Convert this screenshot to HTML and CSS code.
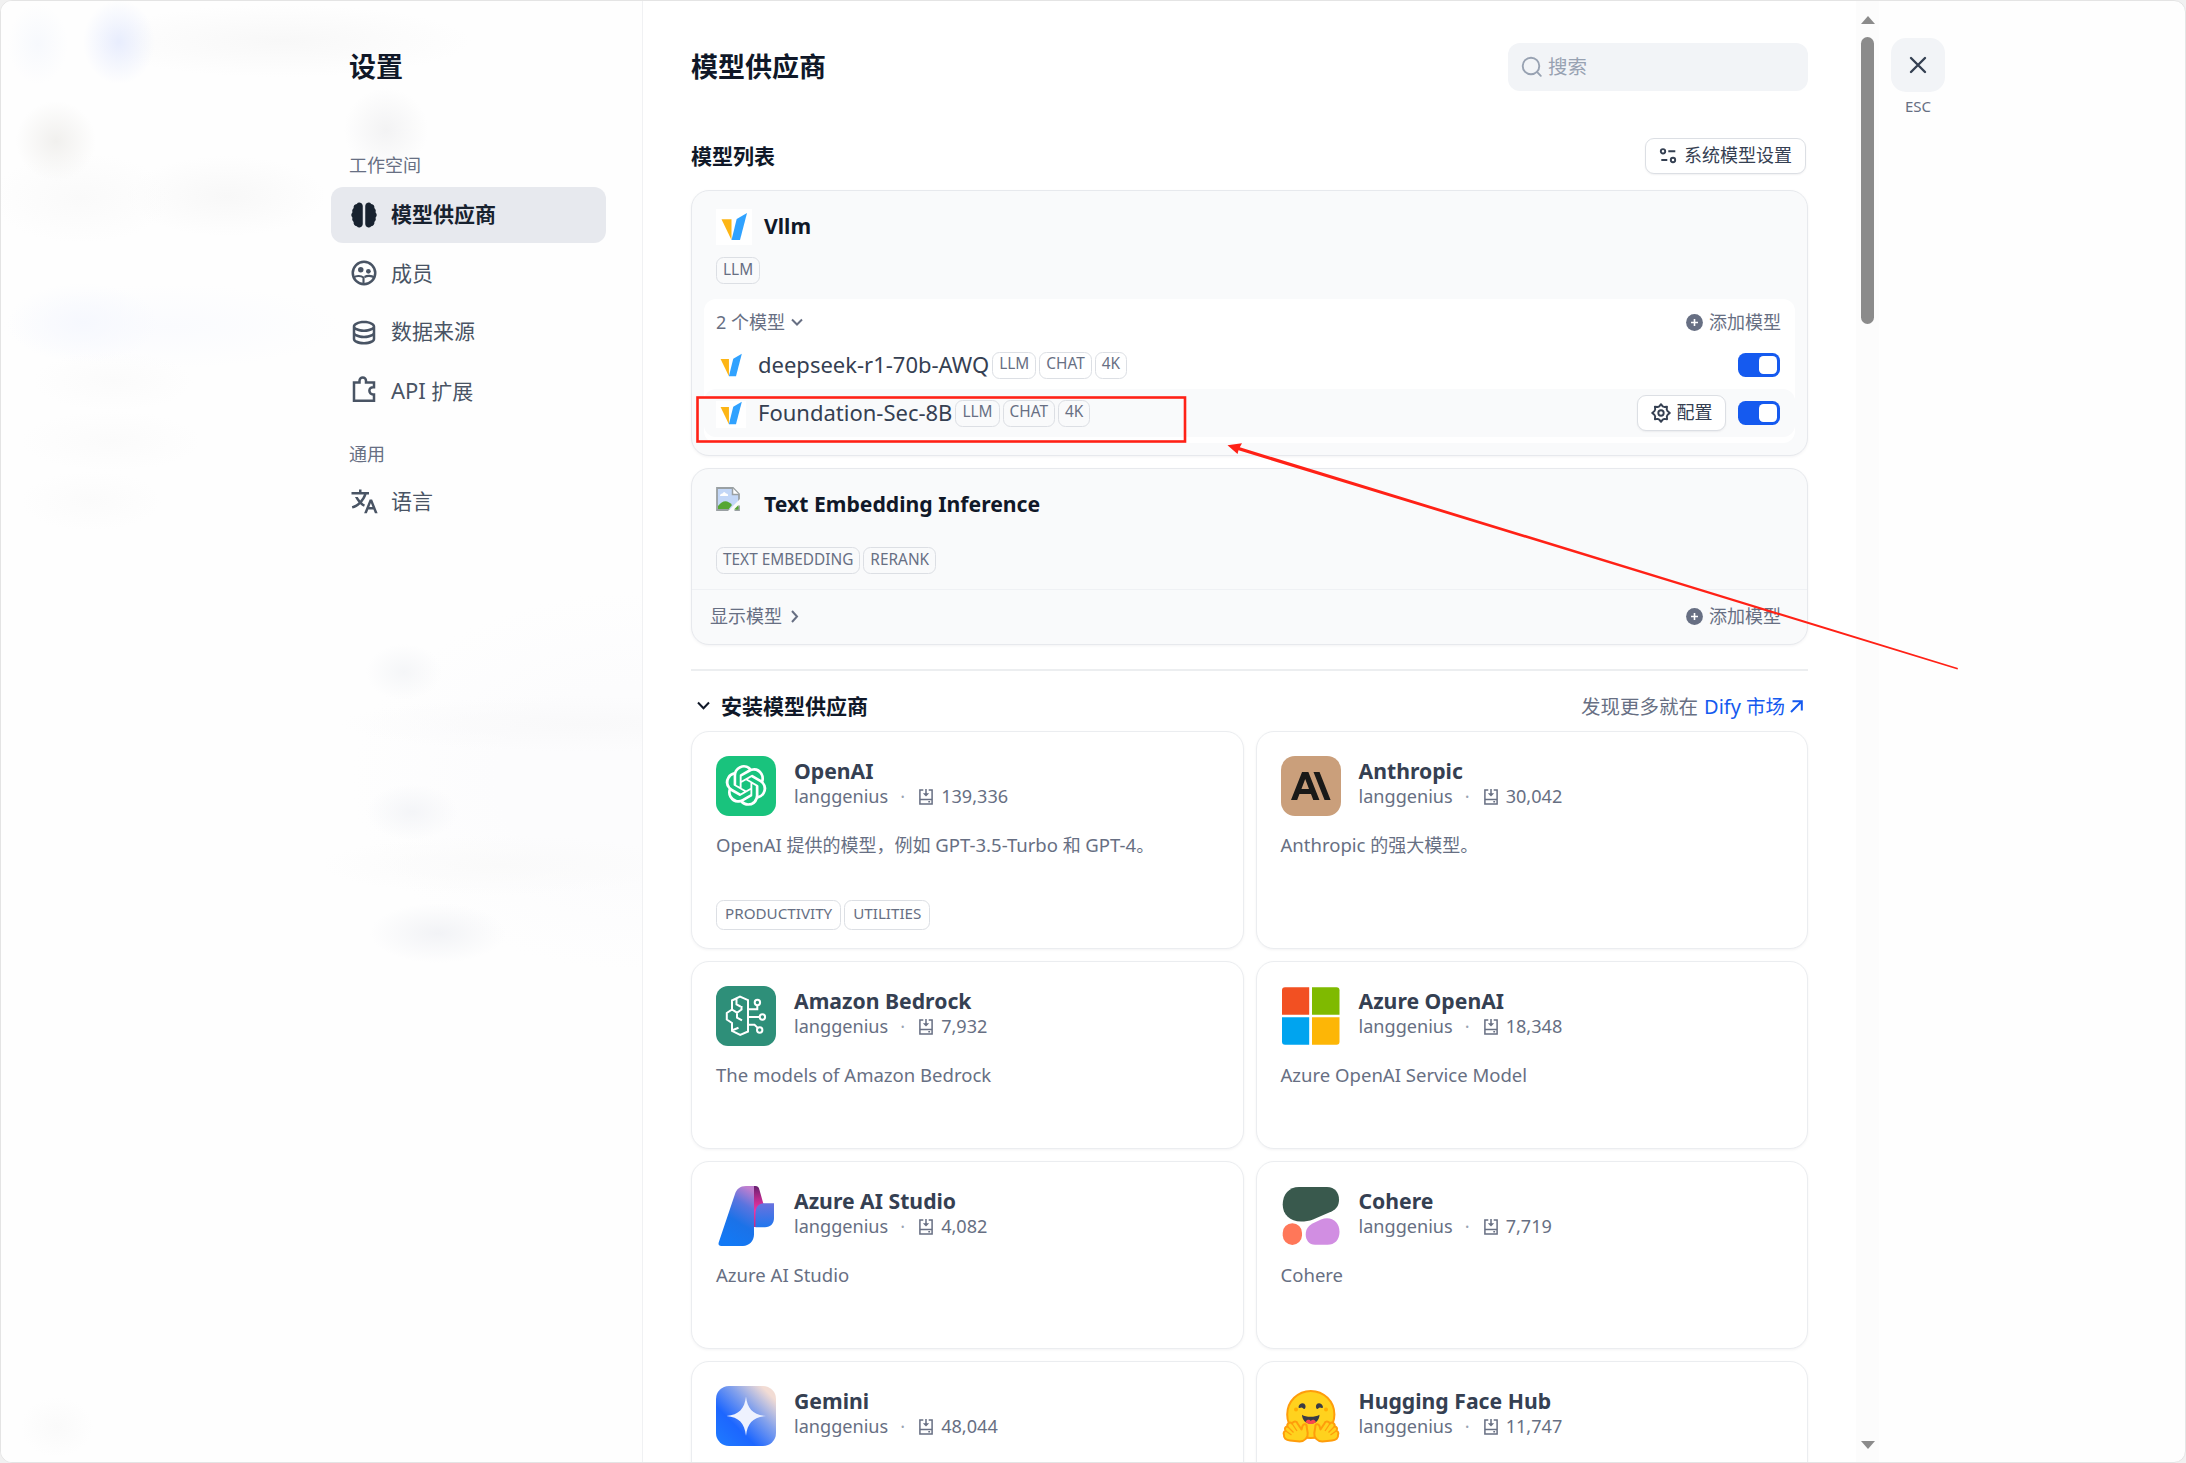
FILE: index.html
```html
<!DOCTYPE html>
<html lang="zh-CN">
<head>
<meta charset="utf-8">
<title>设置</title>
<link rel="stylesheet" href="styles.css">
</head>
<body>
<svg class="defs" width="0" height="0">
  <symbol id="vllm" viewBox="0 0 36 36"><path fill="#fdb515" d="M5.5 10.3h10V31z"/><path fill="#30a2ff" d="M31 4L20.7 10 15.5 31H24z"/></symbol>
  <symbol id="vllm-row" viewBox="0 3 36 32.4"><path fill="#fdb515" d="M5.5 10.3h10V31z"/><path fill="#30a2ff" d="M31 4L20.7 10 15.5 31H24z"/></symbol>
  <symbol id="plus" viewBox="0 0 17 17"><circle cx="8.5" cy="8.5" r="8.4" fill="#676f83"/><path d="M8.5 5v7M5 8.5h7" stroke="#fff" stroke-width="1.6"/></symbol>
  <symbol id="install" viewBox="0 0 14 16"><path fill="none" stroke="#676f83" stroke-width="1.5" d="M4.3 1H.9v14h12.2V1H9.7M.9 10.4h12.2M7 0v6M9.3 12.7h1.8"/><path fill="#676f83" d="M3.8 4.2h6.4L7 7.6z"/></symbol>
</svg>
<div class="window">
  <aside class="sidebar">
    <h1 class="sidebar-title">设置</h1>
    <div class="group-label">工作空间</div>
    <nav class="menu">
      <a class="menu-item active"><svg class="menu-icon" viewBox="0 0 24 24"><path d="M11 4.6v14.8A2.7 2.7 0 0 1 6.2 20.900A3 3 0 0 1 3.700 17.600A3.300 3.300 0 0 1 2.700 14A3 3 0 0 1 2.700 10A3.300 3.300 0 0 1 3.700 6.400A3 3 0 0 1 6.200 3.100A2.700 2.700 0 0 1 11 4.600ZM13 4.600v14.800A2.700 2.700 0 0 0 17.800 20.900A3 3 0 0 0 20.300 17.600A3.300 3.300 0 0 0 21.300 14A3 3 0 0 0 21.300 10A3.300 3.300 0 0 0 20.300 6.400A3 3 0 0 0 17.800 3.100A2.700 2.700 0 0 0 13 4.600Z"/></svg>模型供应商</a>
      <a class="menu-item"><svg class="menu-icon" viewBox="0 0 24 24"><g fill="none" stroke="currentColor" stroke-width="2"><circle cx="12" cy="12" r="9"/><path d="M3.800 15.600c1.700-1.500 5.600-1.800 7.800 0V21M12.500 15.200c2-1.300 5.600-1.100 7.700.3" stroke-width="1.700"/></g><circle cx="9.400" cy="9.300" r="2.200"/><circle cx="15.500" cy="10.600" r="1.900"/></svg>成员</a>
      <a class="menu-item"><svg class="menu-icon" viewBox="0 0 24 24"><path d="M5 12.500C5 12.813 5.461 13.358 6.530 13.893C7.914 14.585 9.877 15 12 15C14.123 15 16.086 14.585 17.470 13.893C18.539 13.358 19 12.813 19 12.500V10.329C17.350 11.348 14.827 12 12 12C9.173 12 6.650 11.348 5 10.329V12.500ZM19 15.329C17.350 16.348 14.827 17 12 17C9.173 17 6.650 16.348 5 15.329V17.500C5 17.813 5.461 18.358 6.530 18.893C7.914 19.585 9.877 20 12 20C14.123 20 16.086 19.585 17.470 18.893C18.539 18.358 19 17.813 19 17.500V15.329ZM3 17.500V7.500C3 5.015 7.029 3 12 3C16.971 3 21 5.015 21 7.500V17.500C21 19.985 16.971 22 12 22C7.029 22 3 19.985 3 17.500ZM12 10C14.123 10 16.086 9.585 17.470 8.893C18.539 8.358 19 7.813 19 7.500C19 7.187 18.539 6.642 17.470 6.107C16.086 5.415 14.123 5 12 5C9.877 5 7.914 5.415 6.530 6.107C5.461 6.642 5 7.187 5 7.500C5 7.813 5.461 8.358 6.530 8.893C7.914 9.585 9.877 10 12 10Z"/></svg>数据来源</a>
      <a class="menu-item"><svg class="menu-icon" viewBox="0 0 24 24"><path fill="none" stroke="currentColor" stroke-width="2" d="M4 6h4.400V4.500a2.600 2.600 0 0 1 5.200 0V6H20v3.700h-.8a2.900 2.900 0 0 0 0 5.800h.8V20.500H4z"/></svg><span><span class="latin-21">API</span> 扩展</span></a>
    </nav>
    <div class="group-label second">通用</div>
    <nav class="menu">
      <a class="menu-item"><svg class="menu-icon" viewBox="0 0 24 24"><path d="M18.500 10L22.900 21H20.745L19.544 18H15.454L14.255 21H12.101L16.500 10H18.500ZM10 2V4H16V6L14.032 6.001C13.243 8.366 11.999 10.506 10.412 12.301C11.134 12.946 11.917 13.518 12.748 14.008L11.997 15.886C10.924 15.278 9.919 14.552 9 13.725C7.214 15.332 5.109 16.555 2.799 17.273L2.263 15.344C4.239 14.720 6.045 13.674 7.590 12.302C6.463 11.028 5.509 9.580 4.767 8L7.007 8C7.570 9.039 8.240 10.003 9 10.877C10.228 9.465 11.221 7.816 11.910 6.001L2 6V4H8V2H10ZM17.500 12.885L16.253 16H18.745L17.500 12.885Z"/></svg>语言</a>
    </nav>
  </aside>

  <main class="content">
    <header class="page-head">
      <h1 class="page-title">模型供应商</h1>
      <div class="search"><svg width="22" height="22" viewBox="0 0 22 22"><g fill="none" stroke="#98a2b2" stroke-width="1.900" stroke-linecap="round"><circle cx="10" cy="10" r="8.300"/><path d="M16.200 16.200l3.600 3.600"/></g></svg>搜索</div>
    </header>
    <div class="list-head">
      <h2 class="section-title">模型列表</h2>
      <button class="btn system"><svg width="18" height="17" viewBox="0 0 18 17"><g fill="none" stroke="#354052" stroke-width="1.900"><circle cx="4" cy="4.300" r="2.200"/><path d="M9.300 4.300h7M2.300 13h6"/><circle cx="14" cy="13" r="2.200"/></g></svg>系统模型设置</button>
    </div>

    <section class="provider vllm">
      <div class="provider-name"><svg class="logo36"><use href="#vllm"/></svg><span>Vllm</span></div>
      <div class="badges"><span class="badge">LLM</span></div>
      <div class="models">
        <div class="models-head">
          <span class="count">2 个模型<svg width="12" height="9" viewBox="0 0 12 9"><path d="M1 1.500l5 5 5-5" fill="none" stroke="#676f83" stroke-width="2"/></svg></span>
          <span class="add"><svg width="17" height="17"><use href="#plus"/></svg>添加模型</span>
        </div>
        <div class="model-row">
          <svg class="row-logo"><use href="#vllm-row"/></svg><span class="model-name">deepseek-r1-70b-AWQ</span>
          <span class="badge">LLM</span><span class="badge">CHAT</span><span class="badge">4K</span>
          <span class="toggle"><i></i></span>
        </div>
        <div class="model-row hover">
          <svg class="row-logo"><use href="#vllm-row"/></svg><span class="model-name">Foundation-Sec-8B</span>
          <span class="badge">LLM</span><span class="badge">CHAT</span><span class="badge">4K</span>
          <button class="btn config"><svg width="20" height="20" viewBox="0 0 20 20"><g fill="none" stroke="#354052" stroke-width="1.900" stroke-linejoin="round"><circle cx="10" cy="10" r="2.700"/><path d="M8.300 3.300L10 1.200l1.700 2.100 1.600.7 2.700-.3-.3 2.700.8 1.700L18.800 10l-2.200 1.800-.8 1.700.3 2.700-2.700-.3-1.700.7L10 18.800l-1.700-2.200-1.700-.7-2.700.3.300-2.700-.8-1.700L1.200 10l2.200-1.900.8-1.700-.3-2.700 2.700.3z"/></g></svg>配置</button>
          <span class="toggle"><i></i></span>
        </div>
      </div>
    </section>

    <section class="provider tei">
      <div class="provider-name">
        <svg class="broken" width="24" height="24" viewBox="0 0 24 24"><path d="M1 1h16l6 6v16H1z" fill="#c3d7f7"/><path d="M2 22v-3q7-9 14-1l-4 5z" fill="#55a633"/><path d="M4 9q0-2.500 2.500-2.500Q8 3.500 10 6.500 12.500 6.500 12 9z" fill="#fff"/><path d="M1 23V1h16l6 6v16z" fill="none" stroke="#9aa0a3" stroke-width="1.800"/><path d="M16.500 1v6.500H23" fill="#fff" stroke="#9aa0a3" stroke-width="1.500"/><path d="M24 12L12 24h6l6-6z" fill="#f9fafb"/><path d="M18 22.500l4.500-4.500v4.500z" fill="#55a633"/></svg><span>Text Embedding Inference</span></div>
      <div class="badges"><span class="badge">TEXT EMBEDDING</span><span class="badge">RERANK</span></div>
      <div class="provider-foot">
        <span class="show">显示模型<svg width="8" height="13" viewBox="0 0 8 13"><path d="M1 1l5 5.500L1 12" fill="none" stroke="#676f83" stroke-width="2"/></svg></span>
        <span class="add"><svg width="17" height="17"><use href="#plus"/></svg>添加模型</span>
      </div>
    </section>

    <hr class="rule">
    <div class="install-head">
      <h2 class="section-title install-title"><svg width="13" height="10" viewBox="0 0 13 10"><path d="M1 1.500l5.500 5.700L12 1.500" fill="none" stroke="#101828" stroke-width="2"/></svg>安装模型供应商</h2>
      <p class="discover">发现更多就在 <a><span><span class="latin-195">Dify</span> 市场</span><svg width="13" height="13" viewBox="0 0 13 13"><path d="M2.500 1.200h9.300v9.300M11.500 1.500L1 12" fill="none" stroke="#155aef" stroke-width="2"/></svg></a></p>
    </div>

    <div class="grid">
      <article class="card tall">
        <div class="card-head">
          <svg class="logo" viewBox="0 0 60 60"><rect width="60" height="60" rx="13" fill="#19c37d"/><path transform="translate(9.600 9) scale(1.700)" fill="#fff" d="M22.2819 9.8211a5.9847 5.9847 0 0 0-.5157-4.9108 6.0462 6.0462 0 0 0-6.5098-2.9A6.0651 6.0651 0 0 0 4.9807 4.1818a5.9847 5.9847 0 0 0-3.9977 2.9 6.0462 6.0462 0 0 0 .7427 7.0966 5.98 5.98 0 0 0 .511 4.9107 6.051 6.051 0 0 0 6.5146 2.9001A5.9847 5.9847 0 0 0 13.2599 24a6.0557 6.0557 0 0 0 5.7718-4.2058 5.9894 5.9894 0 0 0 3.9977-2.9001 6.0557 6.0557 0 0 0-.7475-7.0729zm-9.022 12.6081a4.4755 4.4755 0 0 1-2.8764-1.0408l.1419-.0804 4.7783-2.7582a.7948.7948 0 0 0 .3927-.6813v-6.7369l2.02 1.1686a.071.071 0 0 1 .038.052v5.5826a4.504 4.504 0 0 1-4.4945 4.4944zm-9.6607-4.1254a4.4708 4.4708 0 0 1-.5346-3.0137l.142.0852 4.783 2.7582a.7712.7712 0 0 0 .7806 0l5.8428-3.3685v2.3324a.0804.0804 0 0 1-.0332.0615L9.74 19.9502a4.4992 4.4992 0 0 1-6.1408-1.6464zM2.3408 7.8956a4.485 4.485 0 0 1 2.3655-1.9728V11.6a.7664.7664 0 0 0 .3879.6765l5.8144 3.3543-2.0201 1.1685a.0757.0757 0 0 1-.071 0l-4.8303-2.7865A4.504 4.504 0 0 1 2.3408 7.872zm16.5963 3.8558L13.1038 8.364 15.1192 7.2a.0757.0757 0 0 1 .071 0l4.8303 2.7913a4.4944 4.4944 0 0 1-.6765 8.1042v-5.6772a.79.79 0 0 0-.407-.667zm2.0107-3.0231l-.142-.0852-4.7735-2.7818a.7759.7759 0 0 0-.7854 0L9.409 9.2297V6.8974a.0662.0662 0 0 1 .0284-.0615l4.8303-2.7866a4.4992 4.4992 0 0 1 6.6802 4.66zM8.3065 12.863l-2.02-1.1638a.0804.0804 0 0 1-.038-.0567V6.0742a4.4992 4.4992 0 0 1 7.3757-3.4537l-.142.0805L8.704 5.459a.7948.7948 0 0 0-.3927.6813zm1.0976-2.3654l2.602-1.4998 2.6069 1.4998v2.9994l-2.5974 1.4997-2.6067-1.4997Z"/></svg>
          <div class="meta"><h3>OpenAI</h3><p>langgenius<b>·</b><svg width="14" height="16"><use href="#install"/></svg>139,336</p></div>
        </div>
        <p class="desc"><span class="latin-18">OpenAI</span> 提供的模型，例如 <span class="latin-18">GPT-3.5-Turbo</span> 和 <span class="latin-18">GPT-4</span>。</p>
        <div class="tags"><span class="tag">PRODUCTIVITY</span><span class="tag">UTILITIES</span></div>
      </article>
      <article class="card tall">
        <div class="card-head">
          <svg class="logo" viewBox="0 0 60 60"><rect width="60" height="60" rx="14" fill="#ca9f7b"/><path transform="translate(10 10.200) scale(1.650)" fill="#191918" d="M17.3041 3.541h-3.6718l6.696 16.918H24Zm-10.6082 0L0 20.459h3.7442l1.3693-3.5527h7.0052l1.3693 3.5528h3.7442L10.5363 3.5409Zm-.3712 10.2232 2.2914-5.9456 2.2914 5.9456Z"/></svg>
          <div class="meta"><h3>Anthropic</h3><p>langgenius<b>·</b><svg width="14" height="16"><use href="#install"/></svg>30,042</p></div>
        </div>
        <p class="desc"><span class="latin-18">Anthropic</span> 的强大模型。</p>
      </article>
      <article class="card">
        <div class="card-head">
          <svg class="logo" viewBox="0 0 60 60"><rect width="60" height="60" rx="12" fill="#2e8f79"/><g fill="none" stroke="#fff" stroke-width="2"><path d="M32 14.200L24 10.700 16 14.500V23.500L10.800 27V33.500L16 37V45L24.200 49 32 45.500ZM16 23.500l5 3.200 4.500-3.200V20M21 26.700v5l5 2.700M20.500 13v5.500l4 2M17 44l5.500-2.200M32 23.300h9.300V19M32 31h11.700M32 38.700h6.500l3.500 3.400"/><circle cx="41.400" cy="16.500" r="2.700"/><circle cx="46.400" cy="31" r="2.700"/><circle cx="43.700" cy="44" r="2.700"/></g></svg>
          <div class="meta"><h3>Amazon Bedrock</h3><p>langgenius<b>·</b><svg width="14" height="16"><use href="#install"/></svg>7,932</p></div>
        </div>
        <p class="desc"><span class="latin-18">The models of Amazon Bedrock</span></p>
      </article>
      <article class="card">
        <div class="card-head">
          <svg class="logo" viewBox="0 0 60 60"><path fill="#f25022" d="M4 1.300h24.200v27.400H1V4.300a3 3 0 0 1 3-3z"/><path fill="#7fba00" d="M31 1.300h24.500a3 3 0 0 1 3 3v24.400H31z"/><path fill="#00a4ef" d="M1 31.300h27.200v27.400H4a3 3 0 0 1-3-3z"/><path fill="#fdb606" d="M31 31.300h27.500v24.400a3 3 0 0 1-3 3H31z"/></svg>
          <div class="meta"><h3>Azure OpenAI</h3><p>langgenius<b>·</b><svg width="14" height="16"><use href="#install"/></svg>18,348</p></div>
        </div>
        <p class="desc"><span class="latin-18">Azure OpenAI Service Model</span></p>
      </article>
      <article class="card">
        <div class="card-head">
          <svg class="logo" viewBox="0 0 60 60"><defs><linearGradient id="az1" x1=".75" y1="0" x2=".4" y2="1"><stop offset="0" stop-color="#c07fcf"/><stop offset=".28" stop-color="#5a74df"/><stop offset=".6" stop-color="#1b72e8"/><stop offset="1" stop-color="#1279f5"/></linearGradient><linearGradient id="az2" x1="0" y1="0" x2="0" y2="1"><stop offset="0" stop-color="#65206f"/><stop offset=".3" stop-color="#b52a8c"/><stop offset=".6" stop-color="#f034a4"/><stop offset="1" stop-color="#bc2d88"/></linearGradient><linearGradient id="az3" x1="0" y1="0" x2="0" y2="1"><stop offset="0" stop-color="#6a72de"/><stop offset="1" stop-color="#1f76ee"/></linearGradient></defs><path fill="url(#az1)" d="M30 0h8v48.500C38 55 33 60 27 60H5.500C3 60 2 58.500 2.700 56.500L19 8C20.600 3 24 0 30 0z"/><path fill="url(#az2)" d="M38 0h1.500c2.300 0 3.300 1 4 4l4.800 17L41 41h-3z"/><path fill="url(#az3)" d="M39.500 41.300V28c0-7 3-10.700 9-10.700H58V32c0 5.500-3.500 9.300-9 9.300z"/></svg>
          <div class="meta"><h3>Azure AI Studio</h3><p>langgenius<b>·</b><svg width="14" height="16"><use href="#install"/></svg>4,082</p></div>
        </div>
        <p class="desc"><span class="latin-18">Azure AI Studio</span></p>
      </article>
      <article class="card">
        <div class="card-head">
          <svg class="logo" viewBox="0 0 60 60"><path fill="#39594d" d="M18 1h28c8 0 12 6 12 12.500 0 6-2.500 9.500-7 11.700L32 33.500c-3.500 1.500-8 2-12 2C9 35.500 1.700 28.500 1.700 18.500S8 1 18 1z"/><rect x="1.700" y="37.300" width="19.300" height="21.600" rx="9.600" fill="#ff7759"/><path fill="#d18ee2" d="M40 33.500c10-4 18.500 2 18.500 12.500 0 8-5 12.800-12 12.800H34c-6 0-9.300-5-9.300-10 0-6 2.800-9 7.300-11.500z"/></svg>
          <div class="meta"><h3>Cohere</h3><p>langgenius<b>·</b><svg width="14" height="16"><use href="#install"/></svg>7,719</p></div>
        </div>
        <p class="desc"><span class="latin-18">Cohere</span></p>
      </article>
      <article class="card">
        <div class="card-head">
          <svg class="logo" viewBox="0 0 60 60"><defs><linearGradient id="gem" x1="0" y1="1" x2="1" y2="0"><stop offset="0" stop-color="#1f7cff"/><stop offset=".33" stop-color="#1c66ff"/><stop offset=".62" stop-color="#83a1ec"/><stop offset=".88" stop-color="#f2dcd4"/></linearGradient></defs><rect width="60" height="60" rx="13" fill="url(#gem)"/><path fill="#eef2fe" d="M30 10.500C31.500 23 37 28.700 50 30 37 31.300 31.500 37 30 49.800 28.500 37 23 31.300 10.500 30 23 28.700 28.500 23 30 10.500z"/></svg>
          <div class="meta"><h3>Gemini</h3><p>langgenius<b>·</b><svg width="14" height="16"><use href="#install"/></svg>48,044</p></div>
        </div>
      </article>
      <article class="card">
        <div class="card-head">
          <svg class="logo" viewBox="0 0 60 60"><circle cx="29.800" cy="28.500" r="23.600" fill="#ffd21e" stroke="#ff9d0b" stroke-width="2"/><circle cx="15" cy="23.500" r="2" fill="#ffad03"/><circle cx="45" cy="23.500" r="2" fill="#ffad03"/><path fill="#3a3b45" d="M17.500 21c.5-4 6-5.500 7-1.300.3 2-.5 3.500-1.500 3.300-1.300-.3-1.500-1.500-2.500-1.400s-2.800 1-3-.6zM42 21c-.5-4-6-5.500-7-1.300-.3 2 .5 3.500 1.500 3.300 1.300-.3 1.500-1.500 2.500-1.400s2.800 1 3-.6zM21 28.800c4 2.700 13 2.700 17.500 0 0 5-3.700 9-8.700 9S21 33.800 21 28.800z"/><path fill="#f9484f" d="M24.500 36c1.500-3 4-2.500 5.300-1 1.300-1.500 3.700-2 5.200 1-3 2.700-7.500 2.700-10.500 0z"/><g fill="#ffd21e" stroke="#ff9d0b" stroke-width="2" stroke-linejoin="round"><path d="M9 54.500c-4-.5-6.500-2.500-6-5.500-1-2 .3-4 1.500-4.300-1.500-2 0-4.500 2-4.200-1-3 2.500-5.200 4.500-3 1.500-3 5-2.500 5.500 0l4 6 1-3.500c1.500-3 4.500-2 4.200 1l1 6c.5 4.500-3 8.500-8 8.500z"/><path d="M51 54.500c4-.5 6.500-2.500 6-5.500 1-2-.3-4-1.500-4.300 1.500-2 0-4.500-2-4.200 1-3-2.500-5.200-4.500-3-1.500-3-5-2.500-5.500 0l-4 6-1-3.500c-1.500-3-4.500-2-4.200 1l-1 6c-.5 4.500 3 8.500 8 8.500z"/><path d="M6.500 40.500l6 6M11 37.500l5 7.500M4.500 44.700l6 4.300M53.500 40.500l-6 6M49 37.500L44 45M55.500 44.700l-6 4.300" stroke-width="1.300"/></g></svg>
          <div class="meta"><h3>Hugging Face Hub</h3><p>langgenius<b>·</b><svg width="14" height="16"><use href="#install"/></svg>11,747</p></div>
        </div>
      </article>
    </div>
  </main>

  <div class="scrollbar"><span class="arrow-up"></span><span class="thumb"></span><span class="arrow-down"></span></div>
  <div class="closer"><button class="close"><svg width="18" height="18" viewBox="0 0 18 18"><path d="M2 2l14 14M16 2L2 16" stroke="#354052" stroke-width="2.400" stroke-linecap="round"/></svg></button><span>ESC</span></div>
</div>

<svg class="annotation" width="2186" height="1463" viewBox="0 0 2186 1463"><rect x="697.500" y="397.500" width="487.500" height="44" fill="none" stroke="#ff2116" stroke-width="2.600"/><path fill="#ff2116" d="M1227.500 445.300L1242 443.300 1239.800 447.300 1958 667.900 1957.500 669.500 1238.500 450.300 1237.500 454z"/></svg>
</body>
</html>
```
FILE: styles.css
```css
* { box-sizing: border-box; margin: 0; padding: 0; }

body {
  width: 2186px;
  height: 1463px;
  overflow: hidden;
  background: #f1f1f1;
  font-family: "Noto Sans", "Noto Sans CJK SC", sans-serif;
  font-size: 18px;
  line-height: 1.4;
  color: #676f83;
}

.defs { display: block; width: 0; height: 0; }
svg { flex: none; display: block; }
button { font: inherit; color: inherit; }

.window {
  display: flex;
  width: 2186px;
  height: 1463px;
  overflow: hidden;
  border: 1px solid #e4e4e4;
  border-radius: 12px;
  background: #fefefe;
}

/* Sidebar, with the dimmed page showing through */
.sidebar {
  flex: none;
  width: 642px;
  padding: 41px 36px 0 330px;
  border-right: 1px solid #f0f1f3;
  background:
    radial-gradient(ellipse 30px 40px at 37px 43px, #f7f9fd, transparent),
    radial-gradient(ellipse 36px 42px at 118px 41px, #e8edfd, transparent),
    radial-gradient(ellipse 190px 36px at 280px 40px, #f8f8f8, transparent),
    radial-gradient(circle 40px at 55px 140px, #f1f0ee, transparent),
    radial-gradient(ellipse 90px 45px at 80px 197px, #fafafa, transparent),
    radial-gradient(ellipse 100px 40px at 225px 195px, #f8f8f8, transparent),
    radial-gradient(circle 42px at 385px 129px, #f3f3f4, transparent),
    radial-gradient(ellipse 75px 40px at 82px 322px, #f6f8fe, transparent),
    radial-gradient(ellipse 170px 42px at 170px 325px, #fafbfe, transparent),
    radial-gradient(ellipse 80px 30px at 112px 380px, #fbfbfb, transparent),
    radial-gradient(ellipse 90px 30px at 110px 440px, #fbfbfb, transparent),
    radial-gradient(ellipse 70px 30px at 90px 500px, #fbfbfb, transparent),
    radial-gradient(ellipse 38px 28px at 403px 671px, #f5f6f8, transparent),
    radial-gradient(ellipse 240px 28px at 580px 723px, #f9f9fa, transparent),
    radial-gradient(ellipse 46px 28px at 411px 811px, #f4f5f8, transparent),
    radial-gradient(ellipse 180px 30px at 500px 864px, #fafafa, transparent),
    radial-gradient(ellipse 68px 30px at 437px 932px, #f2f3f6, transparent),
    radial-gradient(ellipse 36px 30px at 56px 1426px, #fafafa, transparent),
    radial-gradient(ellipse 290px 190px at 640px 780px, #fcfcfd 50%, transparent),
    #fefefe;
}
.sidebar-title {
  padding-left: 18px;
  font-size: 27px;
  line-height: 50px;
  font-weight: 700;
  color: #101828;
}
.group-label { margin-top: 58px; padding-left: 18px; line-height: 30px; }
.group-label.second { margin-top: 21px; }
.menu { display: flex; flex-direction: column; gap: 3px; margin-top: 7px; }
.group-label.second + .menu { margin-top: 5px; }
.menu-item {
  display: flex;
  align-items: center;
  gap: 12px;
  height: 55.500px;
  padding-left: 18px;
  border-radius: 12px;
  font-size: 21px;
  color: #495464;
}
.menu-item.active { background: rgba(200, 206, 218, .42); color: #18222f; font-weight: 700; }
.menu-icon { width: 30px; height: 30px; fill: currentColor; }

/* Latin runs inside Chinese text, sized to sit evenly beside it */
.latin-21 { font-size: 22px; }
.latin-195 { font-size: 20px; }
.latin-18 { font-size: 18.550px; }

/* Main column */
.content { flex: none; width: 1213px; padding: 42px 48px 0; background: #fff; }
.page-head { display: flex; justify-content: space-between; align-items: center; height: 48px; }
.page-title { padding-bottom: 1px; font-size: 27px; font-weight: 700; color: #101828; }
.search {
  display: flex;
  align-items: center;
  gap: 5px;
  width: 300px;
  height: 48px;
  padding-left: 13px;
  border-radius: 12px;
  background: #f2f4f7;
  font-size: 19.500px;
  color: #98a2b2;
}
.list-head { display: flex; justify-content: space-between; align-items: center; height: 36px; margin-top: 47px; padding-right: 2px; }
.section-title { font-size: 21px; font-weight: 700; color: #101828; }
.list-head .section-title { padding-top: 1px; }

.btn {
  display: flex;
  align-items: center;
  justify-content: center;
  height: 36px;
  padding-bottom: 1px;
  border: 1px solid #dcdfe4;
  border-radius: 9px;
  background: #fff;
  box-shadow: 0 1px 2px rgba(16, 24, 40, .06);
  font-size: 18px;
  color: #354052;
}
.system { width: 161px; gap: 7px; }
.config { width: 89px; gap: 6px; margin-left: auto; }
.config + .toggle { margin-left: 9px; }

.provider {
  border: 1px solid #e7e9ed;
  border-radius: 18px;
  background: #f9fafb;
  box-shadow: 0 1px 3px rgba(16, 24, 40, .05);
}
.vllm { height: 266px; margin-top: 16px; padding: 18px 12px 0; }
.provider-name {
  display: flex;
  align-items: center;
  gap: 12px;
  height: 36px;
  padding-left: 12px;
  font-size: 21.200px;
  font-weight: 700;
  color: #101828;
}
.provider-name span { padding-bottom: 2px; }
.logo36 { width: 36px; height: 36px; background: #fff; }
.badges { display: flex; gap: 3px; margin-top: 12px; padding-left: 12px; }
.badge {
  display: flex;
  align-items: center;
  height: 27px;
  padding: 0 6px 2px;
  border: 1px solid #dcdfe4;
  border-radius: 7.500px;
  font-size: 15.400px;
  white-space: nowrap;
}
.models { height: 144px; margin-top: 15px; border-radius: 12px; background: #fff; }
.models-head { display: flex; justify-content: space-between; align-items: center; height: 48px; padding: 0 14px 1px 12px; }
.models-head .count { display: flex; align-items: center; gap: 6px; }
.add { display: flex; align-items: center; gap: 6px; }
.models-head + .model-row { margin-top: -6px; }
.model-row { display: flex; align-items: center; gap: 3px; height: 48px; padding: 0 15px 0 12px; border-radius: 12px; }
.model-row.hover { background: #f9fafb; }
.row-logo { width: 30px; height: 27px; margin: 3px 9px 0 0; background: #fff; }
.model-name { padding-bottom: 2px; font-size: 22px; color: #354052; white-space: nowrap; }
.toggle {
  display: flex;
  justify-content: flex-end;
  align-items: center;
  width: 42px;
  height: 24px;
  margin-left: auto;
  padding: 3px;
  border-radius: 7.500px;
  background: #155aef;
}
.toggle i { width: 18px; height: 18px; border-radius: 4.500px; background: #fff; }

.tei { height: 177px; margin-top: 12px; padding-top: 18px; }
.tei .provider-name { padding-left: 24px; gap: 24px; }
.broken { align-self: flex-start; }
.tei .badges { margin-top: 24px; padding-left: 24px; }
.provider-foot {
  display: flex;
  justify-content: space-between;
  align-items: center;
  height: 55px;
  margin-top: 15px;
  padding: 0 26px 1px 18px;
  border-top: 1px solid #eff1f4;
}
.show { display: flex; align-items: center; gap: 9px; }

.rule { height: 2px; margin-top: 24px; border: 0; background: #eceef0; }
.install-head { display: flex; justify-content: space-between; align-items: center; height: 60px; padding: 11px 5px 0 6px; }
.install-title { display: flex; align-items: center; gap: 11px; }
.discover { display: flex; align-items: center; gap: 6px; font-size: 19.500px; }
.discover a { display: flex; align-items: center; gap: 5px; color: #155aef; }

/* Marketplace cards */
.grid { display: grid; grid-template-columns: 1fr 1fr; gap: 12px; }
.card {
  height: 188px;
  padding: 24px;
  border: 1px solid #ebedf0;
  border-radius: 18px;
  background: #fff;
  box-shadow: 0 1px 3px rgba(16, 24, 40, .05);
}
.card.tall { height: 218px; }
.card-head { display: flex; gap: 18px; height: 60px; }
.logo { width: 60px; height: 60px; }
.meta h3 { margin-top: 1px; font-size: 21.200px; font-weight: 700; line-height: 28px; color: #354052; }
.meta p { display: flex; align-items: center; line-height: 26px; margin-top: -2px; font-size: 18.100px; }
.meta b { width: 5px; margin: 0 14px 0 12px; font-weight: 400; color: #9aa3b2; }
.meta p svg { margin: 1px 8px 0 0; }
.desc { height: 54px; margin-top: 16px; line-height: 26px; white-space: nowrap; }
.tags { display: flex; gap: 3px; margin-top: 14px; }
.tag {
  display: flex;
  align-items: center;
  height: 30px;
  padding: 0 8px 2px;
  border: 1px solid #dcdfe4;
  border-radius: 7.500px;
  font-size: 15.200px;
}

/* Scrollbar and close control */
.scrollbar { display: flex; flex-direction: column; align-items: center; flex: none; width: 23px; padding: 15px 0 13px; background: #fcfcfc; }
.arrow-up { border: 7.500px solid transparent; border-top: 0; border-bottom: 8px solid #8b8b8b; }
.arrow-down { margin-top: auto; border: 7.500px solid transparent; border-bottom: 0; border-top: 8px solid #8b8b8b; }
.thumb { width: 13px; height: 287px; margin-top: 13px; border-radius: 7px; background: #8b8b8b; }
.closer { display: flex; flex-direction: column; align-items: center; width: 54px; margin-left: 12px; padding-top: 37px; font-size: 15px; }
.close { display: grid; place-items: center; width: 54px; height: 54px; border: 0; border-radius: 15px; background: #f2f4f7; }
.closer span { margin-top: 4px; line-height: 20px; }

/* Red marker drawn over the page */
.annotation { position: absolute; left: 0; top: 0; }
```
